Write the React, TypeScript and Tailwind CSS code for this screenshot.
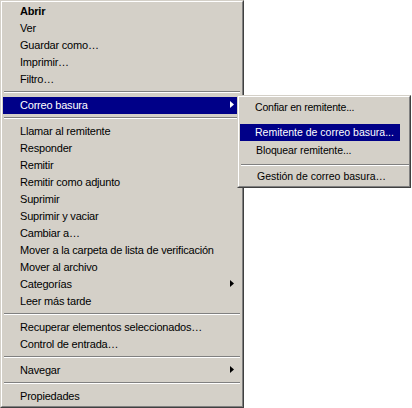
import React from "react";

type Item =
  | { kind: "sep" }
  | { kind: "item"; text: string; bold?: boolean; sub?: boolean; active?: boolean };

const it = (text: string, o: Partial<{ bold: boolean; sub: boolean; active: boolean }> = {}): Item => ({
  kind: "item",
  text,
  ...o,
});
const sep: Item = { kind: "sep" };

const items: Item[] = [
  it("Abrir", { bold: true }),
  it("Ver"),
  it("Guardar como…"),
  it("Imprimir…"),
  it("Filtro…"),
  sep,
  it("Correo basura", { sub: true, active: true }),
  sep,
  it("Llamar al remitente"),
  it("Responder"),
  it("Remitir"),
  it("Remitir como adjunto"),
  it("Suprimir"),
  it("Suprimir y vaciar"),
  it("Cambiar a…"),
  it("Mover a la carpeta de lista de verificación"),
  it("Mover al archivo"),
  it("Categorías", { sub: true }),
  it("Leer más tarde"),
  sep,
  it("Recuperar elementos seleccionados…"),
  it("Control de entrada…"),
  sep,
  it("Navegar", { sub: true }),
  sep,
  it("Propiedades"),
];

function Arrow({ white }: { white?: boolean }) {
  return (
    <svg width="4" height="7" viewBox="0 0 4 7" className="absolute right-[7px] top-[4px]">
      <polygon points="0,0 4,3.5 0,7" fill={white ? "#ffffff" : "#000000"} />
    </svg>
  );
}

function Separator({ h = 9, top = 3, ml = 1, mr = 1 }: { h?: number; top?: number; ml?: number; mr?: number }) {
  return (
    <div style={{ height: h, paddingTop: top, marginLeft: ml, marginRight: mr }}>
      <div className="h-px bg-[#808080]" />
      <div className="h-px bg-white" />
    </div>
  );
}

function Frame({ children, className }: { children: React.ReactNode; className: string }) {
  return (
    <div className={"border border-t-[#d4d0c8] border-l-[#d4d0c8] border-r-[#404040] border-b-[#404040] bg-[#d4d0c8] " + className}>
      <div className="h-full border border-t-white border-l-white border-r-[#808080] border-b-[#808080]">
        {children}
      </div>
    </div>
  );
}

export default function App() {
  return (
    <div
      className="relative w-[412px] h-[408px] bg-white text-black overflow-hidden"
      style={{ fontFamily: '"Liberation Sans", Arial, sans-serif' }}
    >
      <Frame className="w-[244px] h-[408px]">
        <div className="p-px">
          {items.map((m, i) =>
            m.kind === "sep" ? (
              <Separator key={i} />
            ) : (
              <div
                key={i}
                className={
                  "relative h-[17px] leading-[17px] text-[11px] tracking-[-0.2px] pl-[17px] whitespace-nowrap " +
                  (m.active ? "bg-[#000088] text-white " : "") +
                  (m.bold ? "font-bold" : "")
                }
              >
                {m.text}
                {m.sub && <Arrow white={m.active} />}
              </div>
            )
          )}
        </div>
      </Frame>

      <Frame className="absolute left-[237px] top-[95px] w-[174px] h-[93px]">
        <div className="text-[10.5px] whitespace-nowrap">
          <div className="h-[20px] leading-[20px] pl-[16px] tracking-[-0.2px]">Confiar en remitente...</div>
          <div className="h-[7px]" />
          <div className="h-[17px] leading-[17px] ml-px mr-[9px] pl-[15px] bg-[#000088] text-white">
            Remitente de correo basura...
          </div>
          <div className="h-[18px] leading-[18px] pl-[17px] tracking-[-0.1px]">Bloquear remitente...</div>
          <Separator h={10} top={5} ml={2} mr={0} />
          <div className="h-[14px] leading-[14px] pl-[18px]">Gestión de correo basura…</div>
        </div>
      </Frame>
    </div>
  );
}
